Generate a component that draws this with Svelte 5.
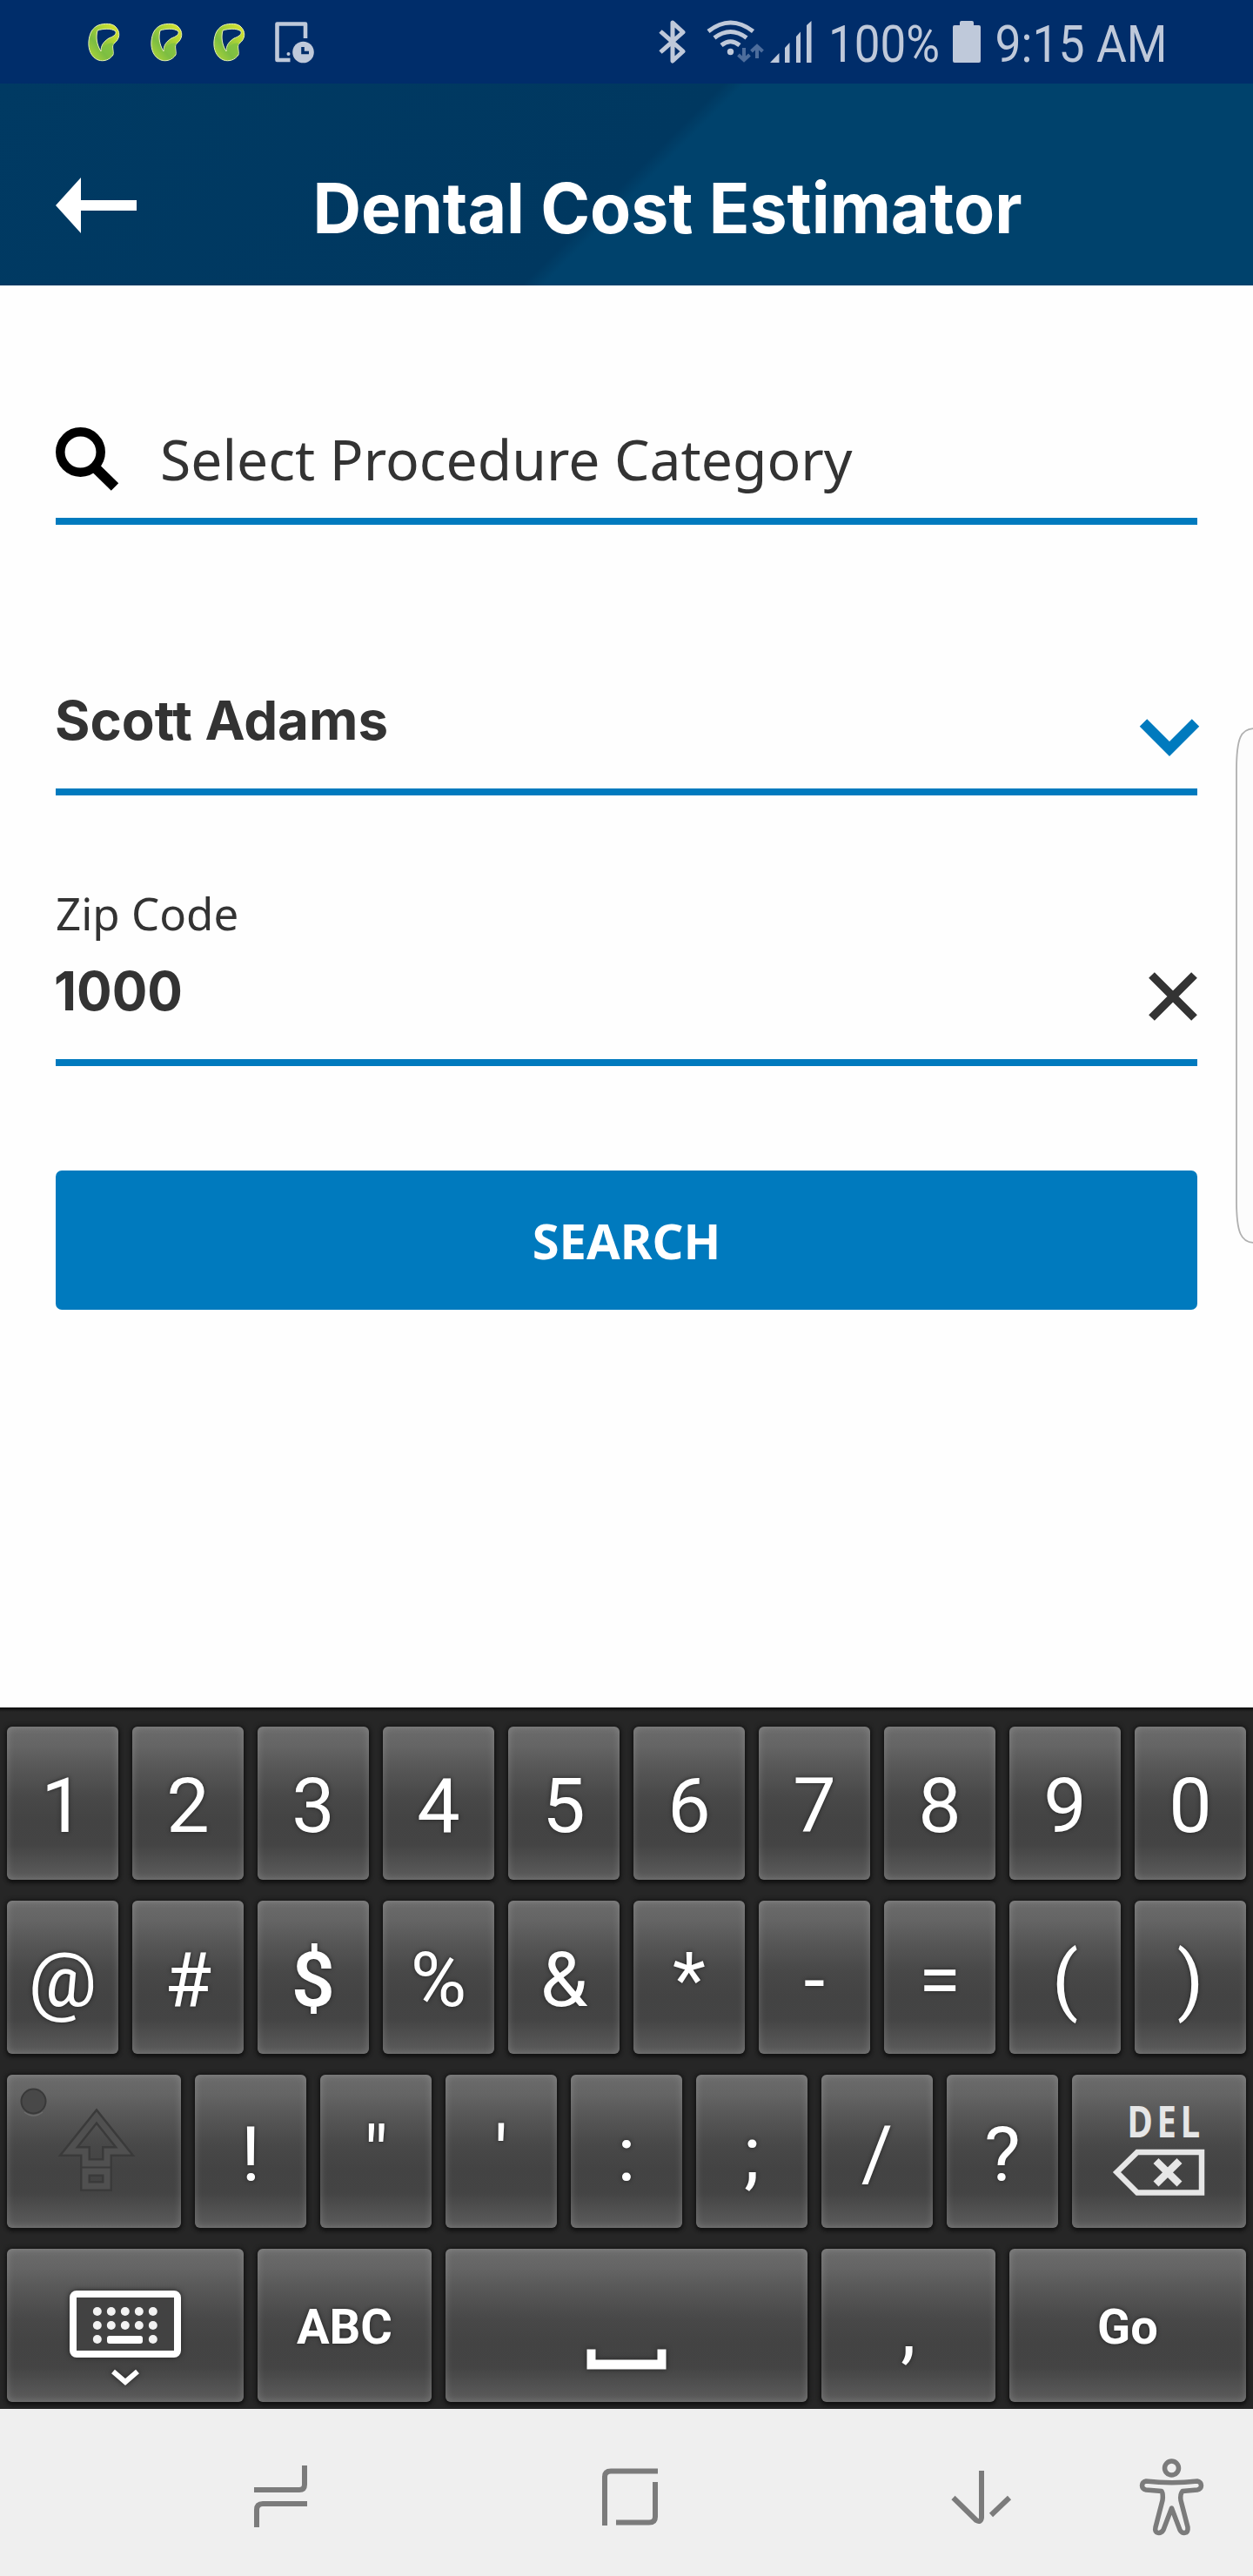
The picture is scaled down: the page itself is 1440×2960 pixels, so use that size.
<script>
  const digits = '1234567890'.split('');
  const symbols = ['@', '#', '$', '%', '&', '*', '-', '=', '(', ')'];
  const marks = ['!', '"', "'", ':', ';', '/', '?'];
  const loops = [0, 1, 2];
  const dots = [
    [111, 2656], [127, 2656], [143, 2656], [159, 2656], [175, 2656],
    [111, 2672], [127, 2672], [143, 2672], [159, 2672], [175, 2672],
    [111, 2688], [175, 2688]
  ];
</script>

<div class="screen">
  <div class="status">
    <div class="notices">
      {#each loops as i}
        <svg class="loop" width="36" height="44" viewBox="101 27 36 44">
          <defs>
            <linearGradient id="leaf{i}" x1="0" y1="1" x2="1" y2="0">
              <stop offset="0" stop-color="#b9d935" />
              <stop offset=".35" stop-color="#7cbd42" />
              <stop offset=".7" stop-color="#b5d634" />
              <stop offset="1" stop-color="#e3e62f" />
            </linearGradient>
          </defs>
          <path
            d="M111 30C116 27 127 26 132 30C139 36 138 45 131 50C128 53 131 58 130 63C126 69 119 71 113 69C105 66 101 57 102 47C103 39 105 34 111 30ZM112 35C110 43 111 51 116 59C116 52 119 48 125 44C130 42 134 40 133 36C128 32 118 33 112 35Z"
            fill="url(#leaf{i})" fill-rule="evenodd" stroke="#eaf5b5" stroke-width="1" />
          <path d="M117 58C121 63 126 65 130 62C130 57 127 54 131 50C125 48 119 52 117 58Z" fill="#7dc043" opacity=".75" />
        </svg>
      {/each}
      <svg class="device" width="46" height="48" viewBox="316 24 46 48">
        <path d="M351 44V27.500H318.500V69H333.500" fill="none" stroke="#bfc9da" stroke-width="4.600" stroke-linejoin="round" />
        <circle cx="331.500" cy="62" r="2" fill="#bfc9da" />
        <circle cx="348.500" cy="60" r="12.300" fill="#bfc9da" />
        <path d="M348 54V60.500H355" fill="none" stroke="#002d6a" stroke-width="3.600" />
      </svg>
    </div>
    <div class="system">
      <svg width="33" height="52" viewBox="756 22 33 52">
        <path d="M759 36L785 59L773 70V26L785 37L759 60" fill="none" stroke="#bfc9da" stroke-width="5" stroke-linejoin="round" />
      </svg>
      <svg class="wifi" width="66" height="50" viewBox="812 23 66 50">
        <g fill="none" stroke="#bfc9da" stroke-width="5">
          <path d="M814 36Q839.500 16 865.500 36" />
          <path d="M821 43.500Q839.500 29.500 858 43.500" />
          <path d="M829 52Q839.500 43.500 850 52" />
        </g>
        <circle cx="839.500" cy="59.500" r="3.700" fill="#bfc9da" />
        <path d="M855 55V69M848.500 63L855 69L861.500 63M870 67V53M863.500 59L870 53L876.500 59" fill="none" stroke="#4d6d9c" stroke-width="4" />
      </svg>
      <svg class="signal" width="49" height="48" viewBox="885 24 49 48" fill="#bfc9da">
        <path d="M885 72L895.500 61V72ZM902 72V55L907.500 49V72ZM915 72V42L920 36.500V72ZM927 72V29L932.500 24V72Z" />
      </svg>
      <svg class="percent" width="126" height="60" viewBox="953 18 126 60">
        <text class="status-text" x="952" y="71" textLength="128" lengthAdjust="spacingAndGlyphs">100%</text>
      </svg>
      <svg class="battery" width="32" height="48" viewBox="1095 24 32 48">
        <path d="M1103 29V26Q1103 24 1105 24H1117Q1119 24 1119 26V29H1125Q1127 29 1127 31V70Q1127 72 1125 72H1097Q1095 72 1095 70V31Q1095 29 1097 29Z" fill="#bfc9da" />
      </svg>
      <svg class="clock" width="200" height="60" viewBox="1143 18 200 60">
        <text class="status-text" x="1143.500" y="71" textLength="198" lengthAdjust="spacingAndGlyphs">9:15 AM</text>
      </svg>
    </div>
  </div>

  <header>
    <svg class="back" width="93" height="66" viewBox="64 203 93 66">
      <path d="M64 236L93 204V230H157V242H93V268Z" fill="#fff" />
    </svg>
    <svg class="title" width="830" height="110" viewBox="350 185 830 110">
      <text x="359.500" y="268" textLength="815" lengthAdjust="spacingAndGlyphs">Dental Cost Estimator</text>
    </svg>
  </header>

  <main>
    <div class="field category">
      <svg width="74" height="74" viewBox="63 490 74 74">
        <circle cx="92.500" cy="519.500" r="23.200" fill="none" stroke="#000" stroke-width="10.500" />
        <path d="M108 536L132 559.500" stroke="#000" stroke-width="12" />
      </svg>
      <span>Select Procedure Category</span>
    </div>
    <div class="field member">
      <svg class="value" width="400" height="80" viewBox="62 790 400 80">
        <text x="63" y="850" textLength="383" lengthAdjust="spacingAndGlyphs">Scott Adams</text>
      </svg>
      <svg class="chevron" width="70" height="46" viewBox="1309 825 70 46">
        <path d="M1314 830.500L1344 860.500L1374 830.500" fill="none" stroke="#007abe" stroke-width="12" />
      </svg>
    </div>
    <div class="field zip">
      <span class="label">Zip Code</span>
      <div class="zip-row">
        <svg class="value" width="180" height="80" viewBox="61 1100 180 80">
          <text x="62" y="1161" textLength="148" lengthAdjust="spacingAndGlyphs">1000</text>
        </svg>
        <svg class="clear" width="58" height="58" viewBox="1319 1116 58 58">
          <path d="M1323.500 1120.500L1372.500 1169.500M1372.500 1120.500L1323.500 1169.500" stroke="#333" stroke-width="9.500" />
        </svg>
      </div>
    </div>
    <button class="search">SEARCH</button>
  </main>
  <svg class="edge" width="22" height="596" viewBox="1418 834 22 596">
    <path d="M1442 837C1426 837 1421 848 1421 885V1380C1421 1416 1426 1428 1442 1428Z" fill="#fcfcfc" stroke="#b0b0b0" stroke-width="1.800" />
  </svg>

  <div class="keyboard">
    <div class="row">
      {#each digits as key}<div class="key"><span>{key}</span></div>{/each}
    </div>
    <div class="row">
      {#each symbols as key}<div class="key"><span class:heavy={key === '$'}>{key}</span></div>{/each}
    </div>
    <div class="row">
      <div class="key mid">
        <svg width="200" height="176" viewBox="8 2384 200 176">
          <circle cx="38.500" cy="2414.500" r="14" fill="#484848" stroke="#393939" stroke-width="2" />
          <path d="M28 2427Q38.500 2435 49 2427" fill="none" stroke="#6c6c6c" stroke-width="1.500" />
          <g fill="none" stroke-linejoin="miter">
            <path d="M111 2432L79 2472H98V2486H123V2472H143ZM98 2495H123V2512H98Z" stroke="#3a3a3a" stroke-width="12" />
            <path d="M111 2432L79 2472H98V2486H123V2472H143ZM98 2495H123V2512H98Z" stroke="#505050" stroke-width="7" />
          </g>
        </svg>
      </div>
      {#each marks as key}<div class="key"><span>{key}</span></div>{/each}
      <div class="key mid">
        <svg width="200" height="176" viewBox="1232 2384 200 176">
          <text class="del" transform="translate(1295.500 2456) scale(.8 1)">DEL</text>
          <path d="M1283.500 2496L1307 2473H1381V2519.500H1307Z" fill="none" stroke="#e6e6e6" stroke-width="6.500" />
          <path d="M1328.500 2483L1355.500 2509.500M1355.500 2483L1328.500 2509.500" stroke="#e6e6e6" stroke-width="8.500" />
        </svg>
      </div>
    </div>
    <div class="row">
      <div class="key wide">
        <svg class="glow" width="272" height="176" viewBox="8 2584 272 176">
          <rect x="84" y="2636" width="120" height="69" rx="4" fill="#424242" stroke="#fff" stroke-width="8" />
          {#each dots as [x, y]}<circle cx={x + 0.8} cy={y} r="5" fill="#f2f2f2" />{/each}
          <rect x="123" y="2684" width="41" height="9" rx="3" fill="#fff" />
          <path d="M130 2725L144 2737L158 2725" fill="none" stroke="#fff" stroke-width="6" />
        </svg>
      </div>
      <div class="key mid word"><span>ABC</span></div>
      <div class="key space">
        <svg class="glow" width="416" height="176" viewBox="512 2584 416 176">
          <path d="M674.500 2699.500H684.500V2711.500H755.500V2699.500H765.500V2722.500H674.500Z" fill="#fff" />
        </svg>
      </div>
      <div class="key mid"><span>,</span></div>
      <div class="key wide word"><span>Go</span></div>
    </div>
  </div>

  <nav>
    <svg class="recents" width="66" height="74" viewBox="290 2832 66 74">
      <path d="M350 2833V2855Q350 2861 344 2861H292M353 2877H302Q295 2877 295 2884V2904" />
    </svg>
    <svg class="home" width="68" height="70" viewBox="690 2834 68 70">
      <path d="M695 2902V2846Q695 2839.500 702 2839.500H756M753 2852V2892Q753 2898.500 746 2898.500H708" />
    </svg>
    <svg class="down" width="70" height="66" viewBox="1092 2837 70 66">
      <path d="M1128 2839V2893Q1127 2899 1122 2896L1095.500 2870M1160 2870L1139 2890" />
    </svg>
    <svg class="access" width="76" height="92" viewBox="1308 2823 76 92">
      <circle cx="1346.500" cy="2836" r="8" />
      <path d="M1317 2851Q1347 2854.500 1376 2851C1382 2852 1382 2860 1376 2861L1359 2862.500Q1356 2866 1357 2873L1365 2904C1366 2912 1358 2912 1356 2907L1346.500 2882L1337 2907C1334 2912 1326 2912 1328 2904L1336 2873Q1337 2866 1335 2862.500L1317 2861C1311 2860 1311 2852 1317 2851Z" />
    </svg>
  </nav>
</div>

<style>
  :global(body) { margin: 0; background: #fff; }
  .screen { position: relative; width: 1440px; height: 2960px; display: flex; flex-direction: column; overflow: hidden; background: #fefefe; font-family: "Noto Sans", sans-serif; color: #333; }
  svg { display: block; flex: none; overflow: visible; }

  .status { height: 96px; flex: none; display: flex; justify-content: space-between; align-items: flex-start; background: #002d6a; box-sizing: border-box; padding: 0 97px 0 101px; }
  .notices, .system { display: flex; align-items: flex-start; }
  .loop { margin: 27px 36px 0 0; }
  .device { margin: 24px 0 0 -1px; }
  .system > svg { margin-top: 22px; }
  .system > .wifi { margin: 23px 0 0 23px; }
  .system > .signal { margin: 24px 0 0 7px; }
  .system > .percent { margin: 18px 0 0 19px; }
  .system > .battery { margin: 24px 0 0 16px; }
  .system > .clock { margin: 18px 0 0 16px; }
  .status-text { font: 400 60px Roboto, sans-serif; fill: #bfc9da; }

  header { height: 232px; flex: none; display: flex; align-items: flex-start; box-sizing: border-box; padding-left: 64px; background: linear-gradient(135deg, #003a63 0, #003860 588px, #00426c 605px, #00426c 100%); }
  .back { margin-top: 107px; }
  .title { margin: 89px 0 0 193px; }
  .title text { font: 700 80px Inter, sans-serif; fill: #fff; font-variant-ligatures: none; }

  main { height: 1634px; flex: none; box-sizing: border-box; padding: 0 64px; display: flex; flex-direction: column; }
  .field { box-sizing: border-box; border-bottom: 8px solid #007abe; flex: none; display: flex; }
  .category { height: 275px; padding-top: 162px; gap: 47px; }
  .category svg { margin-left: -1px; }
  .category span { font-size: 64.200px; line-height: 80px; white-space: nowrap; margin-top: -3px; }
  .member { height: 311px; justify-content: space-between; }
  .member .value { margin: 187px 0 0 -2px; }
  .value text { font: 700 62px Inter, sans-serif; fill: #333; font-variant-ligatures: none; font-feature-settings: "calt" 0; }
  .chevron { margin: 222px -3px 0 0; }
  .zip { height: 311px; flex-direction: column; padding-top: 99px; }
  .label { font-size: 51px; line-height: 72px; height: 72px; }
  .zip-row { display: flex; justify-content: space-between; margin-top: 15px; }
  .zip-row .value { margin-left: -3px; }
  .clear { margin: 16px -1px 0 0; }
  .search { margin-top: 120px; height: 160px; flex: none; border: 0; border-radius: 7px; background: #007abe; color: #fff; font: 700 56px "Noto Sans", sans-serif; padding: 0 0 1px; }
  .edge { position: absolute; right: 0; top: 834px; }

  .keyboard { height: 806px; flex: none; box-sizing: border-box; padding: 22px 8px 0; display: flex; flex-direction: column; gap: 24px; background: linear-gradient(#0c0c0c 0, #262626 5px, #262626 100%); }
  .row { display: flex; gap: 16px; height: 176px; flex: none; }
  .key { width: 128px; flex: none; display: flex; align-items: center; justify-content: center; border-radius: 6px; background: linear-gradient(#6b6b6b 0, #656565 12%, #565656 28%, #484848 46%, #434343 62%, #444 77%, #525252 90%, #5c5c5c 100%); box-shadow: inset 0 0 10px rgba(255, 255, 255, .2), 0 0 5px 1px #141414, 0 3px 4px #101010; }
  .key span { font: 400 88px/100px Roboto, sans-serif; color: #fff; text-shadow: 0 0 5px #222; margin-top: 6px; }
  .key span.heavy { font-weight: 600; }
  .mid { width: 200px; }
  .wide { width: 272px; }
  .space { width: 416px; }
  .word span { font-size: 56px; font-weight: 700; margin-top: 3px; }
  .del { font: 700 50px "Noto Sans", sans-serif; fill: #e6e6e6; letter-spacing: 6px; }
  .glow { filter: drop-shadow(0 0 3px #222); }

  nav { height: 192px; flex: none; display: flex; align-items: flex-start; background: #efefef; }
  nav svg { fill: none; stroke: #7b7b7b; stroke-width: 6; stroke-linejoin: round; }
  .recents { margin: 64px 0 0 290px; }
  .home { margin: 66px 0 0 334px; }
  .down { margin: 69px 0 0 334px; }
  .access { margin: 55px 0 0 146px; stroke-width: 5.500; }
</style>
